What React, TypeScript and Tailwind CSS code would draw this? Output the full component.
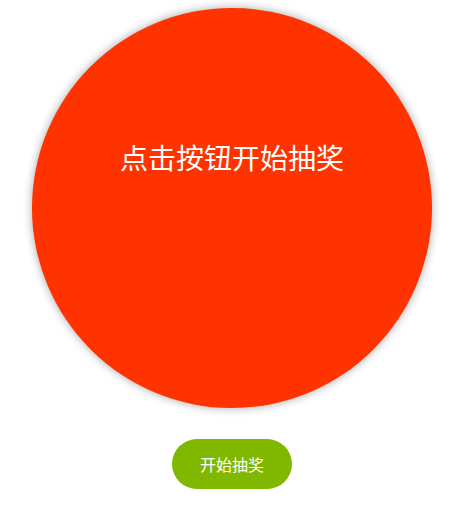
export default function App() {
  return (
    <div className="flex w-[464px] flex-col items-center pt-2 font-['Noto_Sans_CJK_SC',sans-serif]">
      {/* lottery wheel */}
      <div className="flex h-[400px] w-[400px] justify-center rounded-full bg-[#ff3300] pt-[129px] shadow-[0_0_10px_rgba(0,0,0,0.35)]">
        <span className="text-[28px] leading-[40px] text-white">点击按钮开始抽奖</span>
      </div>
      <button className="mt-[31px] h-[50px] w-[120px] rounded-full bg-[#80b800] text-base text-white">
        开始抽奖
      </button>
    </div>
  )
}
